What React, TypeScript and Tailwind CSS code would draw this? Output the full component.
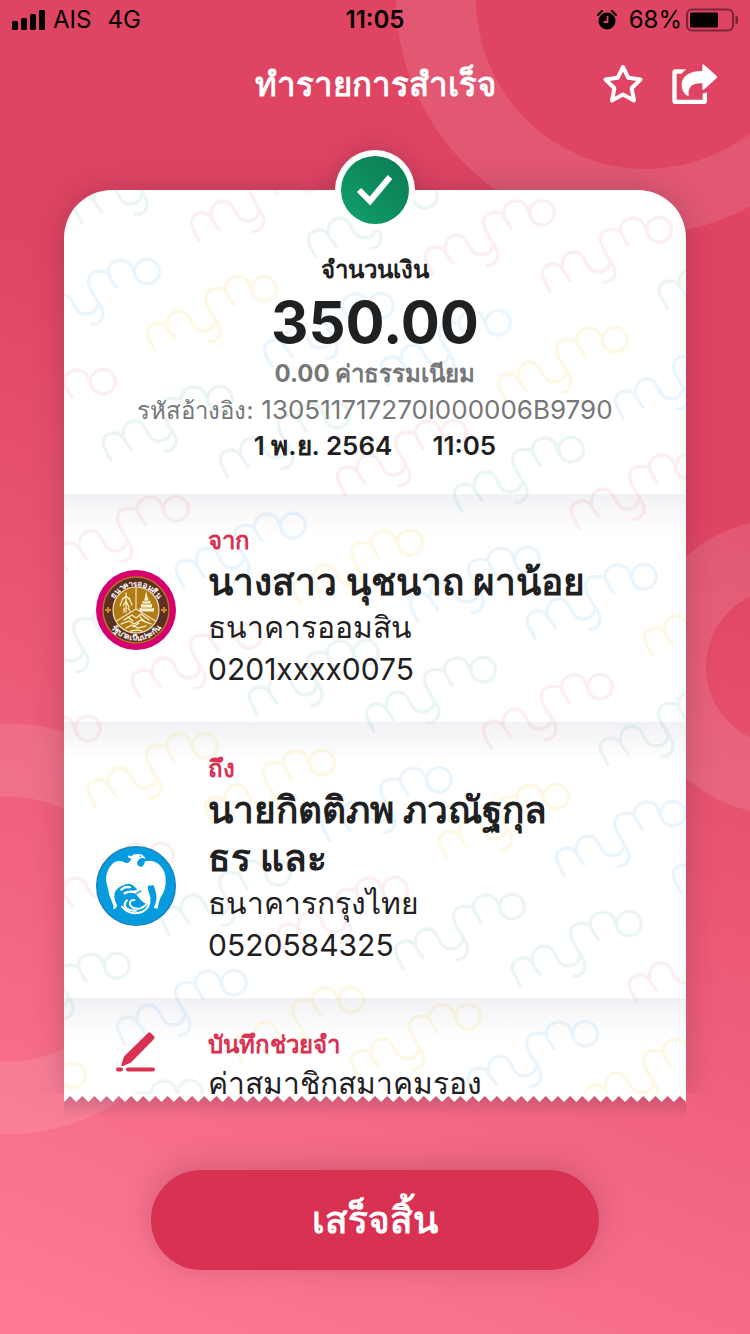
import type { ReactNode } from "react";

const PINK = "#fdeff1";
const GREEN = "#ebf6f3";
const BLUE = "#eaf5fd";
const YELLOW = "#fef8e4";

const ORIGIN = { x: 179, y: 151 };
const STEP = { x: 117, y: 17 };
const ROW = { x: -44, y: 110 };

type MarkRow = { row: number; first: number; colors: string[] };

const MARKS: MarkRow[] = [
  { row: -1, first: 0, colors: [PINK, GREEN] },
  { row: 0, first: -1, colors: [GREEN, PINK, GREEN, PINK, PINK, GREEN] },
  { row: 1, first: -1, colors: [BLUE, YELLOW, BLUE, BLUE, YELLOW, BLUE] },
  { row: 2, first: -1, colors: [PINK, GREEN, GREEN, PINK, GREEN, PINK] },
  { row: 3, first: 0, colors: [PINK, BLUE, YELLOW, BLUE, BLUE, YELLOW] },
  { row: 4, first: 0, colors: [GREEN, PINK, GREEN, GREEN, PINK, GREEN] },
  { row: 5, first: 0, colors: [PINK, YELLOW, YELLOW, BLUE, YELLOW, BLUE, BLUE] },
  { row: 6, first: 1, colors: [PINK, GREEN, PINK, GREEN, GREEN, PINK] },
  { row: 7, first: 1, colors: [GREEN, BLUE, YELLOW, YELLOW, BLUE, YELLOW] },
  { row: 8, first: 1, colors: [YELLOW, GREEN] },
];

function Watermark() {
  return (
    <svg
      aria-hidden="true"
      className="absolute inset-0 h-full w-full"
      viewBox="64 190 622 904"
      preserveAspectRatio="xMidYMin slice"
    >
      <defs>
        <g id="mymo" fill="none" strokeWidth="10" strokeLinecap="round" transform="scale(0.3333)">
          <path d="M60 268 L42 233 C28 205 45 186 72 186 C95 186 98 205 104 212 L120 235" />
          <path d="M97 195 C95 165 112 150 132 150 C175 152 160 210 205 210 C222 210 235 200 240 183" />
          <path d="M265 84 C225 76 205 92 214 125 C222 150 240 170 252 195 C262 222 245 243 222 241" />
          <path d="M295 130 C275 100 263 85 276 65 C290 45 320 42 337 60 C352 80 348 118 387 120" />
          <circle cx="387" cy="83" r="37" />
        </g>
      </defs>
      {MARKS.flatMap(({ row, first, colors }) =>
        colors.map((color, i) => {
          const k = first + i;
          const x = ORIGIN.x + STEP.x * k + ROW.x * row;
          const y = ORIGIN.y + STEP.y * k + ROW.y * row;
          return <use key={`${row}:${k}`} href="#mymo" x={x} y={y} stroke={color} />;
        }),
      )}
    </svg>
  );
}

function Rings() {
  return (
    <svg
      aria-hidden="true"
      className="absolute inset-0 h-full w-full"
      viewBox="0 0 750 1334"
      preserveAspectRatio="xMidYMin slice"
      fill="none"
      stroke="#fff"
      strokeOpacity="0.11"
    >
      <path
        fill="#fff"
        fillOpacity="0.11"
        stroke="none"
        fillRule="evenodd"
        d="M396 -3 a240 238 0 1 0 480 0 a240 238 0 1 0 -480 0 Z M476 -1 a170 170 0 1 0 340 0 a170 170 0 1 0 -340 0 Z"
      />
      <circle cx="7" cy="929" r="169" strokeWidth="73" />
      <circle cx="784" cy="667" r="113" strokeWidth="70" />
    </svg>
  );
}

function StatusBar() {
  return (
    <div className="grid h-10 grid-cols-[1fr_auto_1fr] items-center px-3 text-2xl text-black">
      <div className="flex items-center gap-2">
        <svg width="33" height="20" viewBox="0 0 33 20" aria-hidden="true">
          <rect x="0" y="11" width="6" height="9" rx="1.5" />
          <rect x="9" y="8" width="6" height="12" rx="1.5" />
          <rect x="18" y="4" width="6" height="16" rx="1.5" />
          <rect x="27" y="0" width="6" height="20" rx="1.5" />
        </svg>
        <span>AIS</span>
        <span className="pl-2">4G</span>
      </div>
      <span className="font-semibold">11:05</span>
      <div className="flex items-center justify-end">
        <svg width="20" height="20" viewBox="0 0 20 20" aria-hidden="true">
          <circle cx="10" cy="11" r="8.500" />
          <path d="M1 5 L5 1 M19 5 L15 1" stroke="#000" strokeWidth="2" strokeLinecap="round" />
          <path d="M10.500 6 V12 H6.500" fill="none" stroke="#df4462" strokeWidth="1.800" />
        </svg>
        <span className="pr-1 pl-3">68%</span>
        <svg width="52" height="24" viewBox="0 0 52 24" aria-hidden="true">
          <rect x="1" y="1.500" width="46" height="21" rx="5" fill="none" stroke="#000" strokeOpacity="0.45" strokeWidth="2" />
          <rect x="4" y="4.500" width="28" height="15" rx="1.500" />
          <path d="M49.500 8 a4 4 0 0 1 0 8 Z" fillOpacity="0.450" />
        </svg>
      </div>
    </div>
  );
}

function StarIcon() {
  return (
    <svg width="42" height="40" viewBox="0 0 42 40" fill="none" aria-hidden="true">
      <path
        d="M21 3 L26.300 13.800 L38.500 15.500 L29.600 24.200 L32 36.500 L21 30.600 L10 36.500 L12.400 24.200 L3.500 15.500 L15.700 13.800 Z"
        stroke="#fff"
        strokeWidth="4"
        strokeLinejoin="round"
      />
    </svg>
  );
}

function ShareIcon() {
  return (
    <svg width="46" height="40" viewBox="339 188 138 120" fill="#fff" aria-hidden="true">
      <path d="M350 204 H382 Q374 209 368 217 H353 V295 H431 V277 L444 273 V298 Q444 308 434 308 H350 Q340 308 340 298 V214 Q340 204 350 204 Z" />
      <path d="M430 191 Q431 187 436 191 L473 224 Q476 227 473 230 L436 264 Q430 268 430 262 V246 C400 244 386 256 389 285 C374 279 367 262 368 248 C370 222 396 208 430 209 Z" />
    </svg>
  );
}

function GsbLogo() {
  return (
    <svg viewBox="0 0 80 80" className="h-20 w-20" aria-hidden="true">
      <defs>
        <path id="gsb-top" d="M14.500 42 A25.500 25.500 0 0 1 65.500 42" />
        <path id="gsb-bottom" d="M9.500 40 A30.500 30.500 0 0 0 70.500 40" />
      </defs>
      <circle cx="40" cy="40" r="40" fill="#d5006d" />
      <circle cx="40" cy="40" r="33" fill="#5b2f22" stroke="#b5761c" strokeWidth="1.500" />
      <circle cx="40" cy="40" r="23" fill="#b07a14" stroke="#efe2c0" strokeWidth="1.200" />
      <path d="M40 17.500 V39 M40 39 L20.500 51 M40 39 L59.500 51" stroke="#efe2c0" strokeWidth="1.200" fill="none" />
      <g fill="none" stroke="#fff3d0" strokeWidth="1.300" strokeLinecap="round">
        <path d="M30 23 V42 M30 26 L26 30 M30 26 L34 30 M27 28 L24 36 M33 28 L36 35 M30 31 L27 36 M30 31 L33 37 M28 38 V42 M32 38 L34 41" strokeDasharray="2 1" />
        <path d="M28 50 L36 45 L40 48 L45 44 L53 50 M25 54 L33 51 L38 54 L45 50 L55 54 M30 58 L36 55 L42 58 L50 56 M35 61 L41 60 L46 61 M32 47 L37 51 M44 47 L49 52 M37 57 L43 53" strokeDasharray="3 1" />
      </g>
      <path d="M50 21 L51.500 27 L53 31 H54.500 V34 H56 V38 H58 V41.500 H43.500 V38 H45 V34 H46.500 V31 H48 L49 27 Z" fill="#fff3d0" />
      <path d="M46 34 H55 M45 38 H57 M48 31 H53" stroke="#b07a14" strokeWidth="0.800" />
      <path d="M12 37 V43 M9 40 H15 M68 37 V43 M65 40 H71" stroke="#c98a1f" strokeWidth="2" />
      <g fill="#fff" fontSize="8" fontWeight="700" textAnchor="middle">
        <text>
          <textPath href="#gsb-top" startOffset="50%">ธนาคารออมสิน</textPath>
        </text>
        <text>
          <textPath href="#gsb-bottom" startOffset="50%">รัฐบาลเป็นประกัน</textPath>
        </text>
      </g>
    </svg>
  );
}

function KrungthaiLogo() {
  return (
    <svg viewBox="48 60 240 240" className="h-20 w-20" aria-hidden="true">
      <circle cx="168" cy="180" r="118" fill="#069bdf" stroke="#1580bb" strokeWidth="4" />
      <path
        fill="#fff"
        d="M154 97 Q144 98 144 90 Q149 86 154 91 Q160 83 174 84 Q190 83 197 99 Q188 94 181 97 Q172 103 171 111 Q174 124 186 122 Q194 117 195 106 Q214 100 231 111 Q250 123 256 149 Q260 178 250 200 Q237 217 233 248 L221 245 Q233 223 228 202 Q225 188 221 178 L204 179 Q202 190 209 206 Q214 224 204 236 Q186 230 176 214 Q168 206 160 196 L172 190 L158 178 Q150 170 138 175 Q116 181 106 196 Q98 213 111 238 Q110 249 99 249 Q103 242 97 230 Q86 208 83 184 Q75 162 80 144 Q86 121 103 109 Q118 101 131 108 Q143 116 151 104 Z"
      />
      <g fill="none" stroke="#fff" strokeWidth="6" strokeLinecap="round">
        <path d="M208 215 Q212 246 186 258 Q148 270 126 242" />
        <path d="M141 223 Q128 235 139 247 Q150 256 168 254" />
        <path d="M163 222 Q147 222 150 236 Q158 250 178 248 Q200 242 204 222" />
        <path d="M124 191 Q134 180 150 184 M134 202 Q146 194 164 198" strokeWidth="7" />
      </g>
      <circle cx="181" cy="91" r="2.500" fill="#069bdf" />
      <path d="M148 190 L163 187 M168 204 L184 194" stroke="#069bdf" strokeWidth="4" />
    </svg>
  );
}

function PencilIcon() {
  return (
    <svg width="40" height="40" viewBox="0 0 40 40" fill="#d93152" aria-hidden="true">
      <path d="M32 1 Q33 -0.500 34.500 0.800 L38 4 Q39 5.500 38 7 L15 30.500 L7 34 Q5 34.500 5.500 32.500 L8 24.500 Z" />
      <rect x="0" y="35.500" width="7" height="4" rx="2" />
      <rect x="10" y="35.500" width="29" height="4" rx="2" />
    </svg>
  );
}

type EntryProps = { icon: ReactNode; label: string; children: ReactNode };

function Entry({ icon, label, children }: EntryProps) {
  return (
    <section className="relative flex bg-linear-to-b from-[#1c1c5c]/6 to-transparent to-[40px] pt-[30px] pb-8">
      <div className="flex w-36 shrink-0 justify-center">{icon}</div>
      <div className="min-w-0 flex-1 pr-8 text-[30px] leading-[42px] text-[#1f2021]">
        <h2 className="text-2xl leading-[34px] font-bold text-[#d93152]">{label}</h2>
        {children}
      </div>
    </section>
  );
}

const TEETH = 51;
const ZIGZAG =
  "M0 0 V8 " +
  Array.from({ length: TEETH }, (_, i) => `L${i * 12 + 6} 2 L${i * 12 + 12} 8`).join(" ") +
  " V0 Z";

export default function App() {
  return (
    <div className="relative flex h-screen flex-col overflow-hidden bg-linear-[202deg] from-[#df4462] from-32% to-[#ff7b95] font-['Inter',sans-serif]">
      <Rings />
      <div className="relative">
        <StatusBar />
        <header className="grid h-[88px] grid-cols-[1fr_auto_1fr] items-center px-8 text-white">
          <span />
          <h1 className="text-[33px] leading-[48px] font-bold">ทำรายการสำเร็จ</h1>
          <div className="flex items-center justify-end gap-7">
            <button type="button" aria-label="รายการโปรด">
              <StarIcon />
            </button>
            <button type="button" aria-label="แชร์">
              <ShareIcon />
            </button>
          </div>
        </header>
      </div>

      <main className="relative mx-16 mt-[62px] flex min-h-0 flex-1 flex-col">
        <div className="relative min-h-0 flex-1 [clip-path:inset(-80px_-64px_0_-64px)]">
          <div className="absolute -top-10 left-1/2 h-20 w-20 -translate-x-1/2 rounded-full shadow-[0_0_24px_rgba(60,30,50,0.25)]" />
          <div className="relative h-full overflow-hidden rounded-t-[48px] bg-white shadow-[0_0_30px_rgba(60,30,50,0.25)]">
            <Watermark />
            <section className="relative flex flex-col items-center pt-[62px] pb-[30px] text-2xl leading-9 font-bold text-[#1f2021]">
              <h2>จำนวนเงิน</h2>
              <p className="text-[58px] leading-[68px]">350.00</p>
              <p className="text-[#767779]">0.00 ค่าธรรมเนียม</p>
              <p className="flex h-9 items-baseline gap-2 font-normal text-[#767779]">
                <span>รหัสอ้างอิง:</span>
                <span className="text-[26px]">130511717270I000006B9790</span>
              </p>
              <p className="flex gap-10 text-[26px] font-semibold">
                <span>1 พ.ย. 2564</span>
                <span>11:05</span>
              </p>
            </section>

            <Entry
              label="จาก"
              icon={
                <div className="mb-10 self-end">
                  <GsbLogo />
                </div>
              }
            >
              <p className="text-[37px] leading-[48px] font-bold">นางสาว นุชนาถ ผาน้อย</p>
              <p>ธนาคารออมสิน</p>
              <p>0201xxxx0075</p>
            </Entry>

            <Entry
              label="ถึง"
              icon={
                <div className="mb-10 self-end">
                  <KrungthaiLogo />
                </div>
              }
            >
              <p className="text-[37px] leading-[48px] font-bold">
                นายกิตติภพ ภวณัฐกุล
                <br />
                ธร และ
              </p>
              <p>ธนาคารกรุงไทย</p>
              <p>0520584325</p>
            </Entry>

            <Entry
              label="บันทึกช่วยจำ"
              icon={
                <div className="pt-1">
                  <PencilIcon />
                </div>
              }
            >
              <p>ค่าสมาชิกสมาคมรอง</p>
            </Entry>
          </div>
          <div className="absolute -top-10 left-1/2 flex h-20 w-20 -translate-x-1/2 items-center justify-center rounded-full bg-white">
            <div className="flex h-[68px] w-[68px] items-center justify-center rounded-full bg-linear-to-tr from-[#12a06c] to-[#0a7a52]">
              <svg width="40" height="40" viewBox="0 0 40 40" fill="none" aria-hidden="true">
                <path d="M4 20 L15 31 L35 7" stroke="#fff" strokeWidth="6" />
              </svg>
            </div>
          </div>
        </div>
        <div className="h-6 bg-linear-to-b from-[#50284a]/25 to-transparent">
          <svg
            aria-hidden="true"
            className="block h-2 w-full"
            viewBox="0 0 612 8"
            preserveAspectRatio="none"
            fill="#fff"
          >
            <path d={ZIGZAG} />
          </svg>
        </div>
      </main>

      <footer className="relative flex justify-center px-8 pt-[52px] pb-16">
        <button
          type="button"
          className="h-[100px] w-full max-w-[448px] rounded-full bg-[#d93152] text-[37px] font-bold text-white shadow-[0_-4px_30px_rgba(90,40,70,0.25)]"
        >
          เสร็จสิ้น
        </button>
      </footer>
    </div>
  );
}
